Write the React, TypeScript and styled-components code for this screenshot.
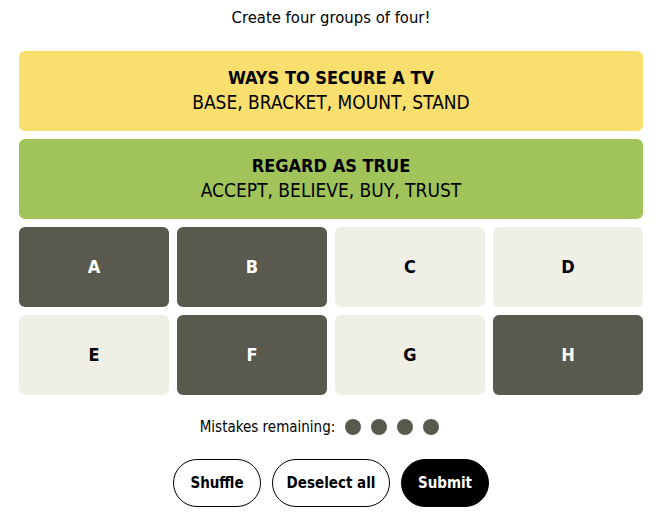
import React from "react";
import styled, { createGlobalStyle } from "styled-components";

const Global = createGlobalStyle`
  html, body { margin: 0; padding: 0; background: #fff; }
  body { font-family: "Liberation Sans Narrow", "DejaVu Sans Condensed", "Liberation Sans", sans-serif; color: #000; }
`;

const Page = styled.div`
  width: 624px;
  margin: 0 auto;
  padding-top: 8px;
  display: flex;
  flex-direction: column;
  align-items: stretch;
`;

const Title = styled.div`
  text-align: center;
  font-size: 16.5px;
  line-height: 20px;
  margin-bottom: 23px;
`;

const Board = styled.div`
  display: flex;
  flex-direction: column;
  gap: 8px;
`;

const Band = styled.div<{ $bg: string }>`
  background: ${(p) => p.$bg};
  border-radius: 6px;
  height: 80px;
  display: flex;
  flex-direction: column;
  align-items: center;
  justify-content: center;
`;

const BandTitle = styled.div`
  font-weight: 700;
  font-size: 18px;
  line-height: 24px;
  margin-top: -2px;
`;

const BandWords = styled.div`
  font-size: 19px;
  line-height: 24px;
`;

const Grid = styled.div`
  display: grid;
  grid-template-columns: repeat(4, 150px);
  grid-auto-rows: 80px;
  gap: 8px;
`;

const Tile = styled.div<{ $sel: boolean }>`
  border-radius: 6px;
  background: ${(p) => (p.$sel ? "#5a594e" : "#efefe6")};
  color: ${(p) => (p.$sel ? "#fff" : "#000")};
  display: flex;
  align-items: center;
  justify-content: center;
  font-weight: 700;
  font-size: 18px;
  padding-bottom: 1px;
`;

const Mistakes = styled.div`
  margin-top: 24px;
  display: flex;
  align-items: center;
  justify-content: center;
  gap: 10px;
  font-size: 15px;
  height: 16px;
  padding-right: 23px;
`;

const Dots = styled.div`
  display: flex;
  gap: 10px;
`;

const Dot = styled.span`
  width: 16px;
  height: 16px;
  border-radius: 50%;
  background: #5a594e;
`;

const Buttons = styled.div`
  margin-top: 24px;
  display: flex;
  justify-content: center;
  gap: 11px;
`;

const Btn = styled.button<{ $w: number; $dark?: boolean }>`
  width: ${(p) => p.$w}px;
  height: 48px;
  border-radius: 24px;
  border: 1px solid #000;
  background: ${(p) => (p.$dark ? "#000" : "#fff")};
  color: ${(p) => (p.$dark ? "#fff" : "#000")};
  font-family: inherit;
  font-weight: 700;
  font-size: 15px;
  padding: 0;
`;

const tiles: [string, boolean][] = [
  ["A", true], ["B", true], ["C", false], ["D", false],
  ["E", false], ["F", true], ["G", false], ["H", true],
];

export default function App() {
  return (
    <>
      <Global />
      <Page>
        <Title>Create four groups of four!</Title>
        <Board>
          <Band $bg="#f9df6d">
            <BandTitle>WAYS TO SECURE A TV</BandTitle>
            <BandWords>BASE, BRACKET, MOUNT, STAND</BandWords>
          </Band>
          <Band $bg="#a0c35a">
            <BandTitle>REGARD AS TRUE</BandTitle>
            <BandWords>ACCEPT, BELIEVE, BUY, TRUST</BandWords>
          </Band>
          <Grid>
            {tiles.map(([l, s]) => (
              <Tile key={l} $sel={s}>{l}</Tile>
            ))}
          </Grid>
        </Board>
        <Mistakes>
          <span>Mistakes remaining:</span>
          <Dots>
            <Dot /><Dot /><Dot /><Dot />
          </Dots>
        </Mistakes>
        <Buttons>
          <Btn $w={88}>Shuffle</Btn>
          <Btn $w={118}>Deselect all</Btn>
          <Btn $w={88} $dark>Submit</Btn>
        </Buttons>
      </Page>
    </>
  );
}
